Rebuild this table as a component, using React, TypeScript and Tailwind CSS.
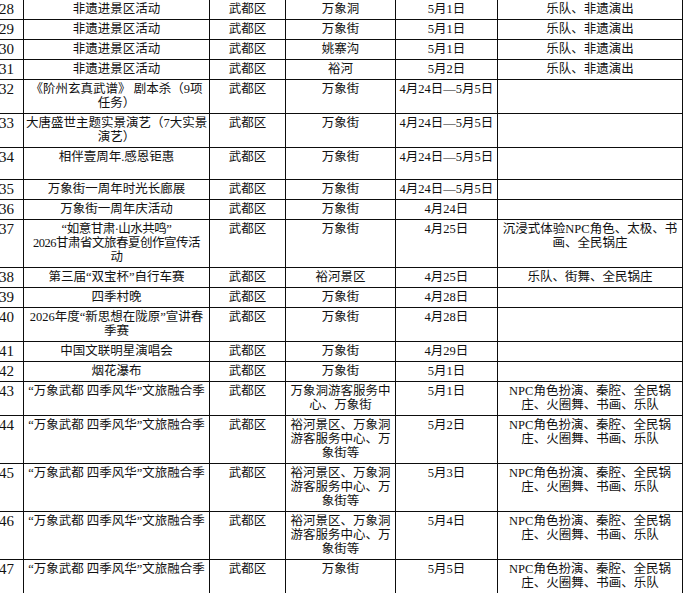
import React from 'react';

type Row = {
  no: number;
  name: string;
  area: string;
  place: string;
  date: string;
  content: string;
  tall?: boolean;
  nameClass?: string;
};

const SEASON = '“万象武都 四季风华”文旅融合季';
const NPC = 'NPC角色扮演、秦腔、全民锅\n庄、火圈舞、书画、乐队';
const YUHE = '裕河景区、万象洞\n游客服务中心、万\n象街等';

const ROWS: Row[] = [
  { no: 28, name: '非遗进景区活动', area: '武都区', place: '万象洞', date: '5月1日', content: '乐队、非遗演出' },
  { no: 29, name: '非遗进景区活动', area: '武都区', place: '万象街', date: '5月1日', content: '乐队、非遗演出' },
  { no: 30, name: '非遗进景区活动', area: '武都区', place: '姚寨沟', date: '5月1日', content: '乐队、非遗演出' },
  { no: 31, name: '非遗进景区活动', area: '武都区', place: '裕河', date: '5月2日', content: '乐队、非遗演出' },
  { no: 32, name: '《阶州玄真武谱》 剧本杀（9项\n任务）', area: '武都区', place: '万象街', date: '4月24日—5月5日', content: '' },
  { no: 33, name: '大唐盛世主题实景演艺（7大实景\n演艺）', area: '武都区', place: '万象街', date: '4月24日—5月5日', content: '' },
  { no: 34, name: '相伴壹周年.感恩钜惠', area: '武都区', place: '万象街', date: '4月24日—5月5日', content: '', tall: true },
  { no: 35, name: '万象街一周年时光长廊展', area: '武都区', place: '万象街', date: '4月24日—5月5日', content: '' },
  { no: 36, name: '万象街一周年庆活动', area: '武都区', place: '万象街', date: '4月24日', content: '' },
  {
    no: 37,
    name: '“如意甘肃·山水共鸣”\n2026甘肃省文旅春夏创作宣传活\n动',
    area: '武都区',
    place: '万象街',
    date: '4月25日',
    content: '沉浸式体验NPC角色、太极、书\n画、全民锅庄',
    nameClass: 'tracking-[-0.5px]',
  },
  { no: 38, name: '第三届“双宝杯”自行车赛', area: '武都区', place: '裕河景区', date: '4月25日', content: '乐队、街舞、全民锅庄' },
  { no: 39, name: '四季村晚', area: '武都区', place: '万象街', date: '4月28日', content: '' },
  { no: 40, name: '2026年度“新思想在陇原”宣讲春\n季赛', area: '武都区', place: '万象街', date: '4月28日', content: '' },
  { no: 41, name: '中国文联明星演唱会', area: '武都区', place: '万象街', date: '4月29日', content: '' },
  { no: 42, name: '烟花瀑布', area: '武都区', place: '万象街', date: '5月1日', content: '' },
  { no: 43, name: SEASON, area: '武都区', place: '万象洞游客服务中\n心、万象街', date: '5月1日', content: NPC },
  { no: 44, name: SEASON, area: '武都区', place: YUHE, date: '5月2日', content: NPC },
  { no: 45, name: SEASON, area: '武都区', place: YUHE, date: '5月3日', content: NPC },
  { no: 46, name: SEASON, area: '武都区', place: YUHE, date: '5月4日', content: NPC },
  { no: 47, name: SEASON, area: '武都区', place: '万象街', date: '5月5日', content: NPC },
];

// each '\n' is a forced line break, lines never wrap on their own
const Lines: React.FC<{ text: string; className?: string }> = ({ text, className }) => (
  <>
    {text.split('\n').map((line, i) => (
      <div key={i} className={`whitespace-nowrap ${className ?? ''}`}>
        {line || '\u00a0'}
      </div>
    ))}
  </>
);

const cell = 'border border-[#0d0d0d] px-[2px] pt-[2px] pb-[3px] align-top text-center';

const App: React.FC = () => {
  return (
    <div className="w-[690px] h-[593px] overflow-hidden bg-white">
      <table className="table-fixed border-collapse w-[686px] -ml-[4px] -mt-[1px] font-['Liberation_Serif','Noto_Sans_CJK_SC',serif] text-[12.5px] leading-[14px] text-[#111]">
        <colgroup>
          <col className="w-[27px]" />
          <col className="w-[186px]" />
          <col className="w-[76px]" />
          <col className="w-[110px]" />
          <col className="w-[102px]" />
          <col className="w-[185px]" />
        </colgroup>
        <tbody>
          {ROWS.map(row => (
            <tr key={row.no} className={row.tall ? 'h-[32px]' : ''}>
              <td className="border border-[#0d0d0d] pl-[2px] pt-[2px] pb-[3px] align-top text-left text-[15px] leading-[14px] whitespace-nowrap overflow-hidden">
                {row.no}
              </td>
              <td className={cell}>
                <Lines text={row.name} className={row.nameClass} />
              </td>
              <td className={cell}>
                <Lines text={row.area} />
              </td>
              <td className={cell}>
                <Lines text={row.place} />
              </td>
              <td className={cell}>
                <Lines text={row.date} />
              </td>
              <td className={cell}>
                {row.content ? <Lines text={row.content} /> : null}
              </td>
            </tr>
          ))}
        </tbody>
      </table>
    </div>
  );
};

export default App;
